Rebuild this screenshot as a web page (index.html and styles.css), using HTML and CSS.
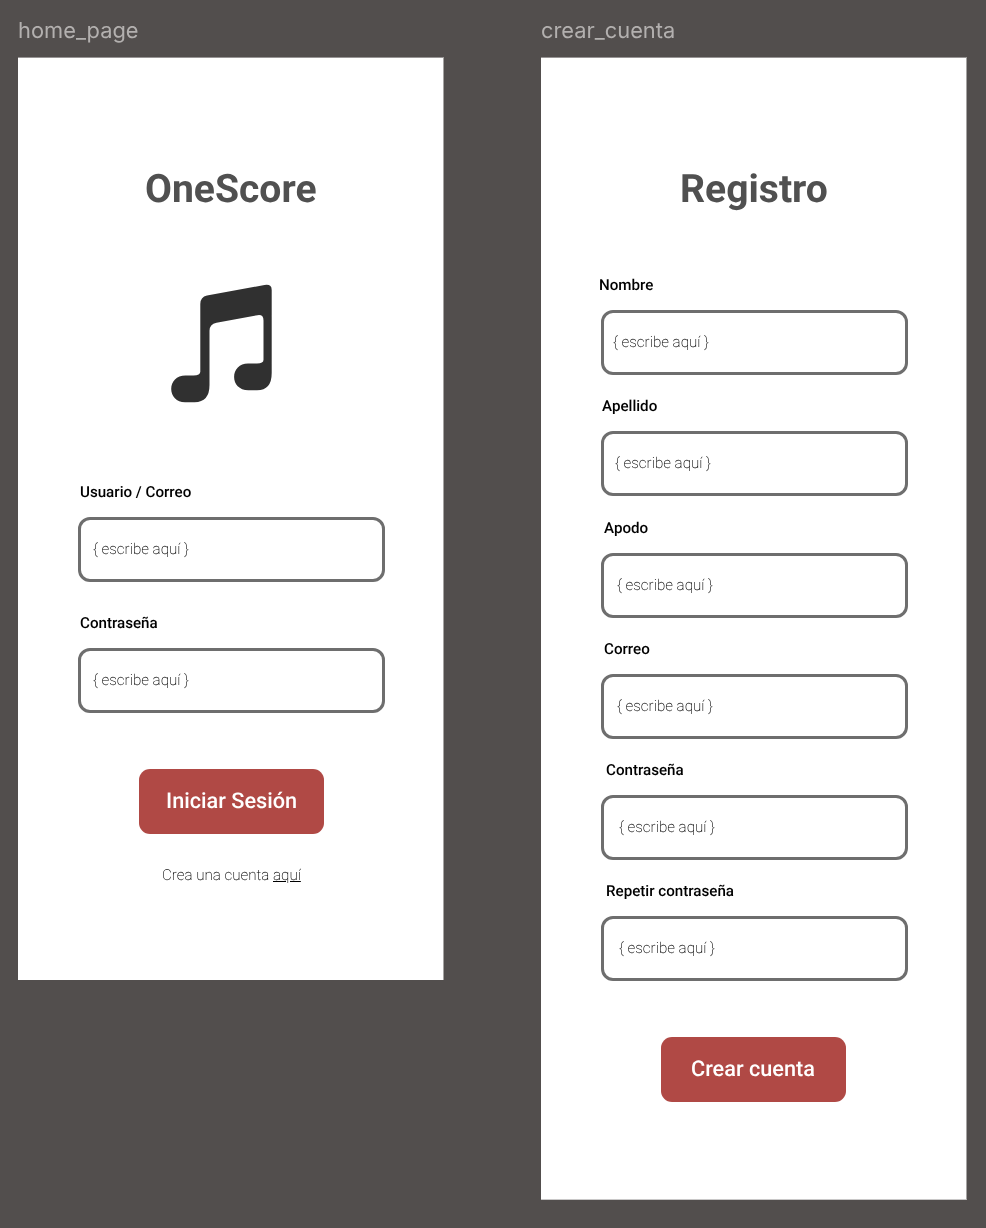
FILE: index.html
```html
<!DOCTYPE html>
<html lang="es">
<head>
<meta charset="utf-8">
<title>OneScore</title>
<link rel="stylesheet" href="styles.css">
</head>
<body>
<main class="canvas">
  <section class="frame">
    <h2 class="frame-name frame-name-home"><span>home_page</span></h2>
    <div class="board board-home">
      <h1 class="title title-home"><span>OneScore</span></h1>
      <svg class="note" viewBox="0 0 102 120" width="102" height="120" aria-hidden="true">
        <path fill="#303030" d="M30.3 20Q30.3 13 37 11.500L94.500 1Q101.700 -.2 101.700 5.900V89Q101.700 106.300 87 106.300H78.500C69 106.300 64.100 99.700 64.100 93C64.100 85.700 69.500 79.600 78 79.600H87Q93.500 79.600 93.500 75.800V36.500Q93.500 30.200 87.500 31.200L46.500 38.700Q39.500 40.200 39.500 46.700V101Q39.500 118.200 24.500 118.200H15C6.500 118.200 1.200 112 1.200 104.900C1.200 97.700 6.500 91.400 15.500 91.400H23.500Q30.300 91.400 30.300 87.700Z"/>
      </svg>
      <form class="form form-home">
        <div class="field"><label class="label"><span>Usuario / Correo</span></label><div class="input"><span>{ escribe aquí }</span></div></div>
        <div class="field"><label class="label"><span>Contraseña</span></label><div class="input"><span>{ escribe aquí }</span></div></div>
      </form>
      <div class="button button-home"><span>Iniciar Sesión</span></div>
      <p class="signup"><span>Crea una cuenta <a class="link">aquí</a></span></p>
    </div>
  </section>
  <section class="frame">
    <h2 class="frame-name frame-name-crear"><span>crear_cuenta</span></h2>
    <div class="board board-crear">
      <h1 class="title title-crear"><span>Registro</span></h1>
      <form class="form form-crear">
        <div class="field shift-0"><label class="label"><span>Nombre</span></label><div class="input"><span>{ escribe aquí }</span></div></div>
        <div class="field shift-1"><label class="label"><span>Apellido</span></label><div class="input"><span>{ escribe aquí }</span></div></div>
        <div class="field shift-2"><label class="label"><span>Apodo</span></label><div class="input"><span>{ escribe aquí }</span></div></div>
        <div class="field shift-2"><label class="label"><span>Correo</span></label><div class="input"><span>{ escribe aquí }</span></div></div>
        <div class="field shift-3"><label class="label"><span>Contraseña</span></label><div class="input"><span>{ escribe aquí }</span></div></div>
        <div class="field shift-3"><label class="label"><span>Repetir contraseña</span></label><div class="input"><span>{ escribe aquí }</span></div></div>
      </form>
      <div class="button button-crear"><span>Crear cuenta</span></div>
    </div>
  </section>
</main>
</body>
</html>
```
FILE: styles.css
```css
* { box-sizing: border-box; }
html, body { margin: 0; background: #524e4d; }
body { font-family: Roboto, "Liberation Sans", sans-serif; color: #000; text-rendering: geometricPrecision; }
.canvas { display: flex; align-items: flex-start; gap: 97px; height: 1228px; padding-left: 18px; overflow: hidden; }
.canvas span { display: inline-block; will-change: transform; }
.frame { width: 426px; flex: none; }
.frame-name { margin: 0; height: 57px; padding-top: 17px; font: 400 21.850px/28px Inter, sans-serif; color: #b3b0af; white-space: nowrap; }
.board { display: flex; flex-direction: column; background: #fff; border-top: 1px solid #979494; border-right: 1px solid #a5a3a2; }
.board-home { height: 923px; }
.board-crear { height: 1143px; border-bottom: 1px solid #c9c8c8; }
.title { margin: 107px 0 0; height: 48px; font-size: 39.100px; line-height: 48px; font-weight: 700; color: #505050; text-align: center; }
.title-crear { padding-left: 1px; }
.note { display: block; margin: 71px 0 0 152px; flex: none; }
.form { margin: 0; display: flex; flex-direction: column; }
.form-home { padding-left: 60px; margin-top: 78px; gap: 31px; }
.form-crear { padding-left: 60px; margin-top: 62px; gap: 36.300px; }
.field { width: 307px; --shift: 0px; }
.label { display: block; height: 20px; padding-left: calc(2px + var(--shift)); font-size: 15.150px; line-height: 20px; font-weight: 500; white-space: nowrap; }
.input { display: flex; align-items: center; height: 65px; margin-top: 15px; padding-left: calc(12px + var(--shift)); border: 3px solid #6e6e6e; border-radius: 12px; font-size: 15.150px; line-height: 19px; font-weight: 200; color: #000; }
.form-crear .field { height: 85px; }
.form-crear .input { padding-left: calc(11px + var(--shift)); }
.form-crear .label { margin-left: -1px; }
.form-crear .shift-0 .label { margin-left: -2px; }
.shift-0 { --shift: -2px; }
.shift-1 { --shift: 0px; }
.shift-2 { --shift: 2px; }
.shift-3 { --shift: 4px; }
.button { display: flex; align-items: center; justify-content: center; width: 185px; height: 65px; border-radius: 11px; background: #b04945; color: #fff; font-size: 21.700px; font-weight: 500; }
.button-home { margin: 56px 0 0 121px; padding-bottom: 1px; }
.button-crear { margin: 71px 0 0 120px; padding: 0 1px 1px 0; }
.signup { margin: 31px 0 0 144px; font-size: 15.150px; line-height: 20px; font-weight: 200; color: #000; }
.link { text-decoration: underline; }
```
